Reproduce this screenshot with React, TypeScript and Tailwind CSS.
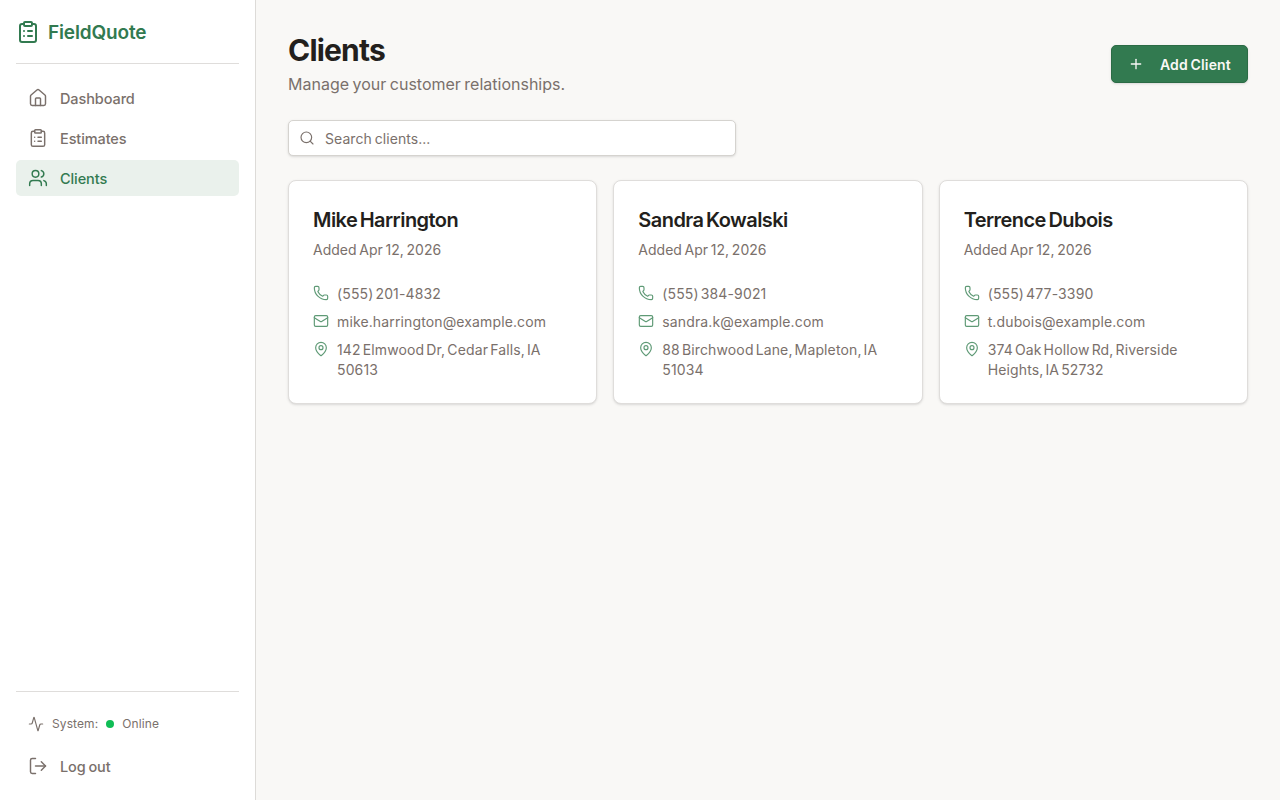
import { Activity, ClipboardList, House, LogOut, Mail, MapPin, Phone, Plus, Search, Users } from "lucide-react";

const clients = [
  { name: "Mike Harrington", phone: "(555) 201-4832", email: "mike.harrington@example.com", addr: "142 Elmwood Dr, Cedar Falls, IA 50613" },
  { name: "Sandra Kowalski", phone: "(555) 384-9021", email: "sandra.k@example.com", addr: "88 Birchwood Lane, Mapleton, IA 51034" },
  { name: "Terrence Dubois", phone: "(555) 477-3390", email: "t.dubois@example.com", addr: "374 Oak Hollow Rd, Riverside Heights, IA 52732" },
];

export default function App() {
  return (
    <div className="flex h-[800px] w-[1280px] overflow-hidden bg-[#f9f8f6] font-['Inter',sans-serif] text-[#231f1c]">
      <aside className="flex w-[256px] shrink-0 flex-col border-r border-[#dddbd8] bg-white px-4 pt-4 pb-4">
        <div className="flex h-[48px] items-start gap-2 border-b border-[#dfdddb]">
          <div className="flex h-[32px] items-center gap-2">
            <ClipboardList className="h-[24px] w-[24px] text-[#327a50]" strokeWidth={2} />
            <span className="pt-[2px] text-[19px] font-semibold tracking-[-0.15px] text-[#327a50]">FieldQuote</span>
          </div>
        </div>
        <nav className="mt-4 flex flex-col gap-1">
          <a className="flex h-[36px] items-center gap-3 rounded-[5px] px-3 text-[14.5px] font-medium tracking-[-0.1px] text-[#7a706b]">
            <House className="h-5 w-5" strokeWidth={1.75} /><span className="pt-[2px]">Dashboard</span>
          </a>
          <a className="flex h-[36px] items-center gap-3 rounded-[5px] px-3 text-[14.5px] font-medium tracking-[-0.1px] text-[#7a706b]">
            <ClipboardList className="h-5 w-5" strokeWidth={1.75} /><span className="pt-[2px]">Estimates</span>
          </a>
          <a className="flex h-[36px] items-center gap-3 rounded-[5px] bg-[#eaf1ec] px-3 text-[14.5px] font-medium tracking-[-0.1px] text-[#327a50]">
            <Users className="h-5 w-5" strokeWidth={1.75} /><span className="pt-[2px]">Clients</span>
          </a>
        </nav>
        <div className="mt-auto border-t border-[#dfdddb] pt-4">
          <div className="flex h-[32px] items-center gap-2 px-3 text-[12px] tracking-[0.1px] text-[#7a706b]">
            <Activity className="h-4 w-4 shrink-0" strokeWidth={1.75} />
            <span>System:</span>
            <span className="h-2 w-2 rounded-full bg-[#0fbd55]" />
            <span>Online</span>
          </div>
          <a className="mt-[8px] flex h-[36px] items-center gap-3 px-3 text-[14.5px] font-medium tracking-[-0.1px] [word-spacing:-1px] text-[#7a706b]">
            <LogOut className="h-5 w-5" strokeWidth={1.75} /><span className="pt-[2px]">Log out</span>
          </a>
        </div>
      </aside>
      <main className="flex-1 px-8 pt-8">
        <div className="flex items-center justify-between">
          <div>
            <h1 className="text-[30px] leading-[36px] font-bold tracking-[-0.8px]">Clients</h1>
            <p className="mt-1 text-[16px] leading-[24px] [word-spacing:-1px] text-[#7a706b]">Manage your customer relationships.</p>
          </div>
          <button className="flex h-[38px] w-[137px] items-center gap-4 rounded-[5px] border border-[#2b6b45] bg-[#327a50] pl-4 text-[14px] font-semibold tracking-[0.15px] [word-spacing:-1px] text-[#f9f8f6] shadow-sm">
            <Plus className="h-4 w-4" strokeWidth={2} />Add Client
          </button>
        </div>
        <div className="mt-[24px] flex h-[36px] w-[448px] items-center gap-[10px] rounded-[5px] border border-[#d5d3cf] bg-white pl-[10px] text-[14px] tracking-[0.05px] [word-spacing:-1px] text-[#7a706b] shadow-sm">
          <Search className="h-4 w-4" strokeWidth={1.75} />
          <span>Search clients...</span>
        </div>
        <div className="mt-[24px] grid grid-cols-3 gap-4">
          {clients.map((c) => (
            <div key={c.name} className="h-[224px] rounded-lg border border-[#dfdddb] bg-white px-6 pt-[25px] shadow-sm">
              <h3 className="text-[20px] leading-[28px] font-semibold tracking-[-0.55px] [word-spacing:-2px]">{c.name}</h3>
              <p className="mt-[6px] text-[14px] leading-[20px] [word-spacing:-1.2px] text-[#7a706b]">Added Apr 12, 2026</p>
              <div className="mt-[24px] flex flex-col gap-2 text-[14px] leading-[20px] tracking-[0.13px] [word-spacing:-2px] text-[#7a706b]">
                <div className="flex gap-2"><Phone className="mt-[1px] h-4 w-4 shrink-0 text-[#5f9a76]" strokeWidth={1.75} /><span>{c.phone}</span></div>
                <div className="flex gap-2"><Mail className="mt-[1px] h-4 w-4 shrink-0 text-[#5f9a76]" strokeWidth={1.75} /><span>{c.email}</span></div>
                <div className="flex gap-2"><MapPin className="mt-[1px] h-4 w-4 shrink-0 text-[#5f9a76]" strokeWidth={1.75} /><span>{c.addr}</span></div>
              </div>
            </div>
          ))}
        </div>
      </main>
    </div>
  );
}
